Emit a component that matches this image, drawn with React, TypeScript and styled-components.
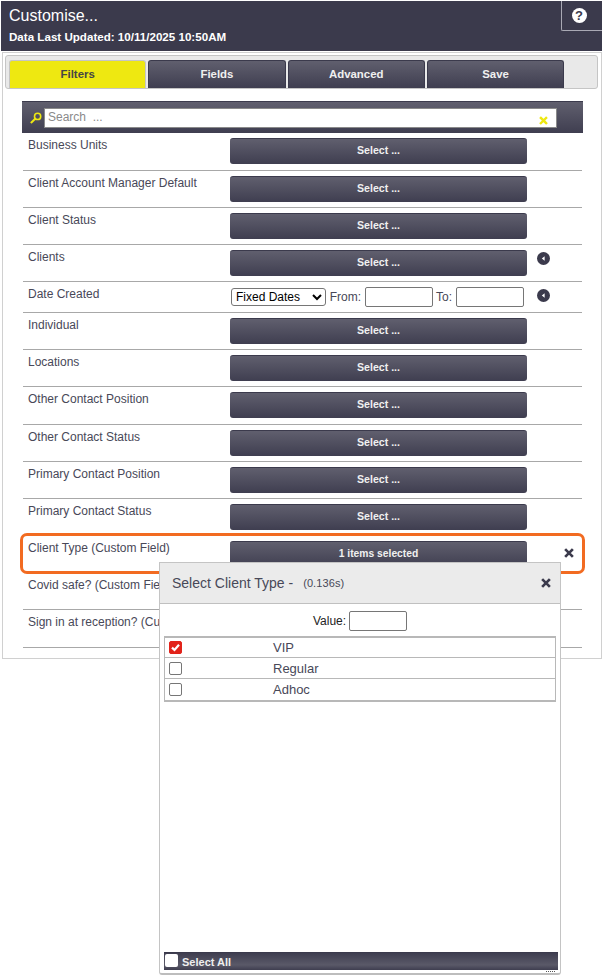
import React from 'react';
import styled, { createGlobalStyle } from 'styled-components';

const GlobalStyle = createGlobalStyle`
  html, body {
    margin: 0;
    padding: 0;
    background: #fff;
    font-family: "Liberation Sans", Arial, sans-serif;
  }
`;

const darkGradient = 'linear-gradient(to bottom, #605f6e 0%, #3f3e50 100%)';

const Page = styled.div`
  position: relative;
  width: 602px;
  height: 976px;
  overflow: hidden;
`;

const Header = styled.header`
  position: relative;
  height: 50px;
  margin: 1px 0 0 1px;
  background: #3b3a4c;
  color: #fff;
  padding: 5px 8px 0;
  box-sizing: border-box;
`;

const Title = styled.div`
  font-size: 16px;
  line-height: 19px;
`;

const Updated = styled.div`
  font-size: 11.6px;
  font-weight: bold;
  line-height: 14px;
  margin-top: 5px;
`;

const HelpBox = styled.div`
  position: absolute;
  top: 0;
  right: 0;
  width: 41px;
  height: 30px;
  box-sizing: border-box;
  border: 1px solid #a9a9b4;
  border-top: none;
  border-right: none;
  border-radius: 0 0 0 2px;
  padding-right: 6px;
  display: flex;
  align-items: center;
  justify-content: center;
`;

const HelpIcon = styled.span`
  width: 15px;
  height: 15px;
  border-radius: 50%;
  background: #fff;
  color: #3b3a4c;
  font-size: 13px;
  font-weight: bold;
  line-height: 15px;
  text-align: center;
`;

const Panel = styled.main`
  height: 607px;
  margin: 1px 0 0 2px;
  border: 1px solid #d0d0d0;
  box-sizing: border-box;
  padding: 2px;
  background: #fff;
`;

const TabBar = styled.nav`
  display: flex;
  gap: 2px;
  height: 34px;
  padding: 4px 0 0 3px;
  box-sizing: border-box;
  background: #e9e9e9;
  border: 1px solid #c5c5c5;
  border-radius: 3px;
  margin-right: 1px;
`;

const Tab = styled.div<{ $active?: boolean }>`
  width: 137.3px;
  height: 28px;
  box-sizing: border-box;
  border: 1px solid ${p => (p.$active ? '#c5c5c5' : '#3b3a4c')};
  border-bottom: none;
  border-radius: 3px 3px 0 0;
  background: ${p => (p.$active ? '#eee811' : darkGradient)};
  color: ${p => (p.$active ? '#454545' : '#f0f0f0')};
  font-size: 11.4px;
  font-weight: bold;
  line-height: 26px;
  text-align: center;
`;

const Content = styled.div`
  width: 559px;
  margin: 12px 0 0 18px;
`;

const SearchBar = styled.div`
  height: 32px;
  box-sizing: border-box;
  margin: 0 -1px;
  border-top: 1px solid #3b3a4c;
  background: ${darkGradient};
  display: flex;
  align-items: center;
  padding: 0 26px 0 8px;
  gap: 2px;
`;

const SearchField = styled.div`
  position: relative;
  flex: 1;
  height: 20px;
  box-sizing: border-box;
  border: 1px solid #8a8a8a;
  background: #fff;
  color: #8a8a8a;
  font-size: 12px;
  line-height: 17px;
  padding-left: 3px;
  white-space: pre;
`;

const ClearMark = styled.span`
  position: absolute;
  right: 8px;
  top: 7px;
  display: flex;
`;

const Row = styled.div<{ $height?: number; $highlight?: boolean; $plain?: boolean }>`
  position: relative;
  display: grid;
  grid-template-columns: 207px 297px 1fr;
  height: ${p => p.$height ?? 37}px;
  box-sizing: border-box;
  border-bottom: 1px solid ${p => (p.$plain ? 'transparent' : '#a8a8a8')};
  ${p => p.$highlight && `
    &::after {
      content: '';
      position: absolute;
      left: -3px;
      right: -3px;
      top: -3px;
      bottom: -2px;
      border: 3px solid #f26b21;
      border-radius: 7px;
      pointer-events: none;
    }
  `}
`;

const Label = styled.div`
  font-size: 12px;
  line-height: 14px;
  color: #484858;
  padding: 5px 0 0 5px;
  white-space: nowrap;
`;

const Cell = styled.div`
  padding-top: 5px;
`;

const SelectButton = styled.div<{ $small?: boolean }>`
  height: 26px;
  box-sizing: border-box;
  border-top: 1px solid #3b3a4c;
  border-radius: 3px;
  background: ${darkGradient};
  color: #f0f0f0;
  font-size: ${p => (p.$small ? 10.3 : 10.6)}px;
  font-weight: bold;
  line-height: 23px;
  text-align: center;
`;

const DateCell = styled.div`
  display: flex;
  align-items: center;
  height: 20px;
  margin-top: 5px;
  color: #484858;
  font-size: 12px;
  white-space: nowrap;
`;

const FakeSelect = styled.select`
  width: 95px;
  height: 18px;
  box-sizing: border-box;
  font-family: "Liberation Sans", Arial, sans-serif;
  font-size: 12px;
  color: #000;
  background: #fff;
  border: 1px solid #767676;
  border-radius: 3px;
  margin: 0 4px 0 1px;
  padding: 0;
`;

const DateInput = styled.input`
  width: 68px;
  height: 20px;
  box-sizing: border-box;
  border: 1px solid #767676;
  border-radius: 2px;
  padding: 0;
  margin: 0 3px 0 4px;
`;

const IconSlot = styled.div`
  padding: 6px 0 0 10px;
`;

const CloseSlot = styled.div`
  padding: 8px 0 0 37px;
`;

const Popup = styled.section`
  position: absolute;
  left: 159px;
  top: 562px;
  width: 402px;
  height: 413px;
  box-sizing: border-box;
  border: 1px solid #c4c4c4;
  border-bottom: 2px solid #bdbdbd;
  border-radius: 0 0 3px 3px;
  background: #fff;
  display: flex;
  flex-direction: column;
`;

const PopupHead = styled.div`
  height: 41px;
  box-sizing: border-box;
  flex: none;
  background: #ebebeb;
  border-bottom: 1px solid #c0c0c0;
  display: flex;
  align-items: center;
  padding: 0 9px 0 12px;
  color: #484858;
`;

const PopupTitle = styled.span`
  font-size: 14px;
`;

const Timing = styled.span`
  font-size: 11px;
  margin-left: 10px;
  flex: 1;
  letter-spacing: 0.1px;
`;

const ValueLine = styled.div`
  display: flex;
  justify-content: center;
  align-items: center;
  gap: 3px;
  height: 32px;
  flex: none;
  font-size: 12px;
  color: #222;
  padding-top: 2px;
  box-sizing: border-box;
`;

const ValueInput = styled.input`
  width: 58px;
  height: 20px;
  box-sizing: border-box;
  border: 1px solid #767676;
  border-radius: 2px;
  padding: 0;
`;

const OptionTable = styled.div`
  flex: none;
  margin: 0 4px;
  border: 1px solid #b8b8b8;
  border-top-width: 2px;
  border-bottom-width: 2px;
`;

const OptionRow = styled.div<{ $last?: boolean }>`
  display: flex;
  align-items: center;
  height: 21px;
  box-sizing: border-box;
  border-bottom: ${p => (p.$last ? 'none' : '1px solid #b8b8b8')};
  font-size: 13px;
  color: #484858;
  padding-left: 4px;

  &:first-child {
    height: 20px;
  }
`;

const Check = styled.span<{ $checked?: boolean }>`
  width: 13px;
  height: 13px;
  box-sizing: border-box;
  border-radius: 2px;
  border: 1px solid ${p => (p.$checked ? '#e2231a' : '#767676')};
  background: ${p => (p.$checked ? '#e2231a' : '#fff')};
  display: flex;
  align-items: center;
  justify-content: center;
`;

const OptionName = styled.span`
  margin-left: 91px;
`;

const PopupFoot = styled.div`
  position: relative;
  margin: auto 2px 3px 4px;
  height: 18px;
  box-sizing: border-box;
  border-top: 1px solid #3b3a4c;
  background: linear-gradient(to bottom, #3f3e50 0%, #5a5968 70%, #3f3e50 100%);
  display: flex;
  align-items: center;
  padding-left: 1px;
  gap: 4px;
  color: #eee;
  font-size: 11px;
  font-weight: bold;
`;

const FootBox = styled.span`
  width: 13px;
  height: 13px;
  margin-top: -3px;
  background: #fff;
  border-radius: 2px;
`;

const ResizeDots = styled.span`
  position: absolute;
  right: 3px;
  bottom: -2px;
  width: 9px;
  border-bottom: 1px dotted #555;
`;

const Cross = ({ color = '#3b3a4c', size = 10 }: { color?: string; size?: number }) => (
  <svg width={size} height={size} viewBox="0 0 12 12">
    <path d="M2.5 2.5 L9.5 9.5 M9.5 2.5 L2.5 9.5" stroke={color} strokeWidth="3.2" strokeLinecap="square" fill="none" />
  </svg>
);

const BackArrow = () => (
  <svg width="13" height="13" viewBox="0 0 13 13">
    <circle cx="6.5" cy="6.5" r="6.5" fill="#3b3a4c" />
    <path d="M7.6 4.2 L4.8 6.5 L7.6 8.8 Z" fill="#fff" />
  </svg>
);

const Magnifier = () => (
  <svg width="12" height="12" viewBox="0 0 12 12">
    <circle cx="7.6" cy="4.4" r="3.1" stroke="#eee811" strokeWidth="1.6" fill="none" />
    <path d="M5.2 6.8 L1.4 10.4" stroke="#eee811" strokeWidth="2" strokeLinecap="round" />
  </svg>
);

const Tick = () => (
  <svg width="11" height="11" viewBox="0 0 11 11">
    <path d="M2 5.6 L4.5 8 L9 2.8" stroke="#fff" strokeWidth="2.2" fill="none" />
  </svg>
);

type FilterRow = { label: string; height?: number; arrow?: boolean };

const rows: FilterRow[] = [
  { label: 'Business Units', height: 38 },
  { label: 'Client Account Manager Default' },
  { label: 'Client Status' },
  { label: 'Clients', arrow: true },
];

const rowsAfterDate: FilterRow[] = [
  { label: 'Individual' },
  { label: 'Locations' },
  { label: 'Other Contact Position', height: 38 },
  { label: 'Other Contact Status' },
  { label: 'Primary Contact Position' },
  { label: 'Primary Contact Status' },
];

const tabs = ['Filters', 'Fields', 'Advanced', 'Save'];
const options = ['VIP', 'Regular', 'Adhoc'];

const renderRow = (row: FilterRow) => (
  <Row key={row.label} $height={row.height}>
    <Label>{row.label}</Label>
    <Cell>
      <SelectButton>Select ...</SelectButton>
    </Cell>
    {row.arrow && (
      <IconSlot>
        <BackArrow />
      </IconSlot>
    )}
  </Row>
);

const App = () => {
  return (
    <Page>
      <GlobalStyle />
      <Header>
        <Title>Customise...</Title>
        <Updated>Data Last Updated: 10/11/2025 10:50AM</Updated>
        <HelpBox>
          <HelpIcon>?</HelpIcon>
        </HelpBox>
      </Header>
      <Panel>
        <TabBar>
          {tabs.map((tab, i) => (
            <Tab key={tab} $active={i === 0}>
              {tab}
            </Tab>
          ))}
        </TabBar>
        <Content>
          <SearchBar>
            <Magnifier />
            <SearchField>
              {'Search  ...'}
              <ClearMark>
                <Cross color="#eee811" size={9} />
              </ClearMark>
            </SearchField>
          </SearchBar>
          {rows.map(renderRow)}
          <Row $height={31}>
            <Label>Date Created</Label>
            <DateCell>
              <FakeSelect defaultValue="Fixed Dates">
                <option>Fixed Dates</option>
              </FakeSelect>
              From:
              <DateInput />
              To:
              <DateInput />
            </DateCell>
            <IconSlot>
              <BackArrow />
            </IconSlot>
          </Row>
          {rowsAfterDate.map(renderRow)}
          <Row $highlight $plain>
            <Label>Client Type (Custom Field)</Label>
            <Cell>
              <SelectButton $small>1 items selected</SelectButton>
            </Cell>
            <CloseSlot>
              <Cross />
            </CloseSlot>
          </Row>
          <Row>
            <Label>Covid safe? (Custom Field)</Label>
          </Row>
          <Row $height={38}>
            <Label>Sign in at reception? (Custom Field)</Label>
          </Row>
        </Content>
      </Panel>
      <Popup>
        <PopupHead>
          <PopupTitle>Select Client Type -</PopupTitle>
          <Timing>(0.136s)</Timing>
          <Cross />
        </PopupHead>
        <ValueLine>
          Value:
          <ValueInput />
        </ValueLine>
        <OptionTable>
          {options.map((option, i) => (
            <OptionRow key={option} $last={i === options.length - 1}>
              <Check $checked={i === 0}>{i === 0 && <Tick />}</Check>
              <OptionName>{option}</OptionName>
            </OptionRow>
          ))}
        </OptionTable>
        <PopupFoot>
          <FootBox />
          Select All
          <ResizeDots />
        </PopupFoot>
      </Popup>
    </Page>
  );
};

export default App;
